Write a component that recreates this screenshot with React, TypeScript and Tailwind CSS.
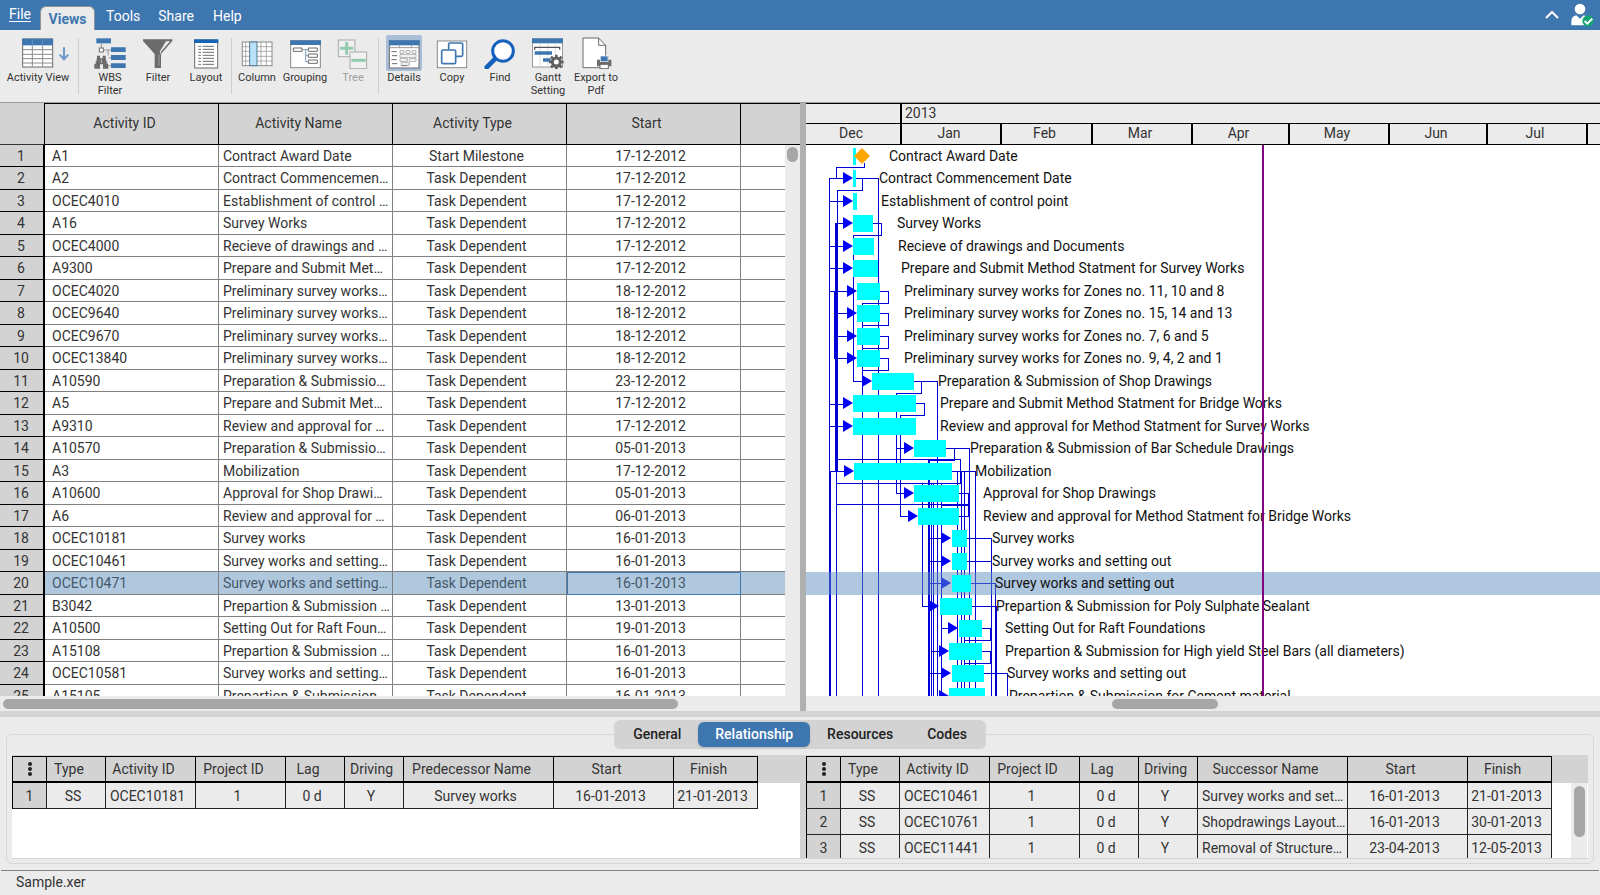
import React, { useState } from 'react';
import clsx from 'clsx';

interface Activity {
  id: string;
  name: string;
  type: string;
  start: string;
  // bar start, bar end and label position on the time scale
  from: number;
  to: number;
  label: number;
  arrow?: number;
}

interface Relation {
  type: string;
  activityId: string;
  projectId: string;
  lag: string;
  driving: string;
  name: string;
  start: string;
  finish: string;
}

const TASK = 'Task Dependent';

const activities: Activity[] = [
  { id: 'A1', name: 'Contract Award Date', type: 'Start Milestone', start: '17-12-2012', from: 47, to: 50, label: 83 },
  { id: 'A2', name: 'Contract Commencement Date', type: TASK, start: '17-12-2012', from: 47, to: 50, label: 73, arrow: 47 },
  { id: 'OCEC4010', name: 'Establishment of control point', type: TASK, start: '17-12-2012', from: 47, to: 51, label: 75, arrow: 47 },
  { id: 'A16', name: 'Survey Works', type: TASK, start: '17-12-2012', from: 47, to: 67, label: 91, arrow: 47 },
  { id: 'OCEC4000', name: 'Recieve of drawings and Documents', type: TASK, start: '17-12-2012', from: 47, to: 68, label: 92, arrow: 47 },
  { id: 'A9300', name: 'Prepare and Submit Method Statment for Survey Works', type: TASK, start: '17-12-2012', from: 47, to: 72, label: 95, arrow: 47 },
  { id: 'OCEC4020', name: 'Preliminary survey works for Zones no. 11, 10 and 8', type: TASK, start: '18-12-2012', from: 51, to: 74, label: 98, arrow: 51 },
  { id: 'OCEC9640', name: 'Preliminary survey works for Zones no. 15, 14 and 13', type: TASK, start: '18-12-2012', from: 51, to: 74, label: 98, arrow: 51 },
  { id: 'OCEC9670', name: 'Preliminary survey works for Zones no. 7, 6 and 5', type: TASK, start: '18-12-2012', from: 51, to: 74, label: 98, arrow: 51 },
  { id: 'OCEC13840', name: 'Preliminary survey works for Zones no. 9, 4, 2 and 1', type: TASK, start: '18-12-2012', from: 51, to: 74, label: 98, arrow: 51 },
  { id: 'A10590', name: 'Preparation & Submission of Shop Drawings', type: TASK, start: '23-12-2012', from: 66, to: 108, label: 132, arrow: 66 },
  { id: 'A5', name: 'Prepare and Submit Method Statment for Bridge Works', type: TASK, start: '17-12-2012', from: 47, to: 110, label: 134, arrow: 47 },
  { id: 'A9310', name: 'Review and approval for Method Statment for Survey Works', type: TASK, start: '17-12-2012', from: 47, to: 110, label: 134, arrow: 47 },
  { id: 'A10570', name: 'Preparation & Submission of Bar Schedule Drawings', type: TASK, start: '05-01-2013', from: 108, to: 140, label: 164, arrow: 108 },
  { id: 'A3', name: 'Mobilization', type: TASK, start: '17-12-2012', from: 48, to: 146, label: 169, arrow: 48 },
  { id: 'A10600', name: 'Approval for Shop Drawings', type: TASK, start: '05-01-2013', from: 108, to: 153, label: 177, arrow: 108 },
  { id: 'A6', name: 'Review and approval for Method Statment for Bridge Works', type: TASK, start: '06-01-2013', from: 112, to: 153, label: 177, arrow: 112 },
  { id: 'OCEC10181', name: 'Survey works', type: TASK, start: '16-01-2013', from: 146, to: 161, label: 186, arrow: 145 },
  { id: 'OCEC10461', name: 'Survey works and setting out', type: TASK, start: '16-01-2013', from: 146, to: 161, label: 186, arrow: 145 },
  { id: 'OCEC10471', name: 'Survey works and setting out', type: TASK, start: '16-01-2013', from: 146, to: 165, label: 189, arrow: 145 },
  { id: 'B3042', name: 'Prepartion & Submission for Poly Sulphate Sealant', type: TASK, start: '13-01-2013', from: 134, to: 166, label: 190, arrow: 133 },
  { id: 'A10500', name: 'Setting Out for Raft Foundations', type: TASK, start: '19-01-2013', from: 153, to: 176, label: 199, arrow: 152 },
  { id: 'A15108', name: 'Prepartion & Submission for High yield Steel Bars (all diameters)', type: TASK, start: '16-01-2013', from: 143, to: 176, label: 199, arrow: 143 },
  { id: 'OCEC10581', name: 'Survey works and setting out', type: TASK, start: '16-01-2013', from: 146, to: 178, label: 201, arrow: 145 },
  { id: 'A15105', name: 'Prepartion & Submission for Cement material', type: TASK, start: '16-01-2013', from: 143, to: 179, label: 203, arrow: 143 },
];

const predecessors: Relation[] = [
  { type: 'SS', activityId: 'OCEC10181', projectId: '1', lag: '0 d', driving: 'Y', name: 'Survey works', start: '16-01-2013', finish: '21-01-2013' },
];

const successors: Relation[] = [
  { type: 'SS', activityId: 'OCEC10461', projectId: '1', lag: '0 d', driving: 'Y', name: 'Survey works and setting out', start: '16-01-2013', finish: '21-01-2013' },
  { type: 'SS', activityId: 'OCEC10761', projectId: '1', lag: '0 d', driving: 'Y', name: 'Shopdrawings Layout…', start: '16-01-2013', finish: '30-01-2013' },
  { type: 'SS', activityId: 'OCEC11441', projectId: '1', lag: '0 d', driving: 'Y', name: 'Removal of Structure…', start: '23-04-2013', finish: '12-05-2013' },
];

const months = [
  { name: 'Dec', width: 'w-24' },
  { name: 'Jan', width: 'w-[100px]' },
  { name: 'Feb', width: 'w-[91px]' },
  { name: 'Mar', width: 'w-[100px]' },
  { name: 'Apr', width: 'w-[97px]' },
  { name: 'May', width: 'w-[100px]' },
  { name: 'Jun', width: 'w-[98px]' },
  { name: 'Jul', width: 'w-[100px]' },
  { name: '', width: 'w-[100px]' },
];

const links = [
  'M58 18 V22 H30 V33 H37',
  'M38 33 H23 V326',
  'M50 33 H72 V551',
  'M56 33 V45 H31 V326',
  'M38 78 H30',
  'M30 326 V551',
  'M67 78 H75 V90 H47 V236 H56',
  'M23 56 H37 M23 101 H37 M23 123 H37 M23 146 H41',
  'M28 168 H41 M28 191 H41 M28 213 H41',
  'M28 146 V213',
  'M74 146 H82 V158 H56 V551',
  'M74 168 H82 V180 H56',
  'M74 191 H82 V203 H56',
  'M74 213 H82 V225 H56',
  'M107 236 H131 V551',
  'M115 236 V248 H90 V348 H98',
  'M23 259 H37 M23 281 H37',
  'M110 258 H118 V270 H94 V371 H102',
  'M90 303 H98',
  'M140 303 H163 V551',
  'M148 303 V315 H122',
  'M31 314 H154 V338 H30',
  'M24 326 H38',
  'M145 326 H169 V551',
  'M151 326 V551',
  'M155 326 V551',
  'M158 326 V551',
  'M153 348 H162 V359 H30',
  'M153 371 H162 V359',
  'M116 338 V461 H124',
  'M125 338 V551',
  'M127 338 V551',
  'M135 338 V551',
  'M122 393 H136 M122 416 H136 M122 438 H136 M122 528 H136',
  'M161 393 H185 V551',
  'M161 416 H185',
  'M165 438 H189 V551',
  'M166 461 H190 V551',
  'M135 483 H143',
  'M176 483 H184 V495 H158',
  'M176 506 H184 V518 H158',
  'M126 506 H134',
  'M178 528 H201 V551',
];

const thickLinks = [
  'M24 326 V551',
  'M30 78 V326',
  'M123 315 V551',
  'M135 360 H162',
  'M190 461 V551',
];

const rowCenter = (index: number) => Math.floor(11 + index * 22.5);

const GRAY = '#6b6b6b';
const BLUE = '#3e76b0';

const ActivityViewIcon = () => (
  <svg width="64" height="32" viewBox="0 0 192 96" fill="none">
    <rect x="50" y="6" width="90" height="84" fill="#fff" stroke={GRAY} strokeWidth="3" />
    <rect x="49" y="5" width="92" height="20" fill={BLUE} />
    <path d="M79 25 V89 M110 25 V89 M51 38 H139 M51 52 H139 M51 65 H139 M51 78 H139" stroke="#8a8a8a" strokeWidth="3" />
    <path d="M79 5 V25 M110 5 V25" stroke="#6f9ac5" strokeWidth="2" />
    <path d="M174 31 V66 M161 53 L174 67 L187 53" stroke="#6b98c9" strokeWidth="6" />
  </svg>
);

const WbsIcon = () => (
  <svg width="32" height="32" viewBox="0 0 96 96" fill="none">
    <path d="M22 19 V32 M29 39 H51 M44 62 H51 M44 86 H51 M42 40 V55" stroke={GRAY} strokeWidth="2" />
    <rect x="7" y="4" width="44" height="15" fill={BLUE} />
    <rect x="16" y="33" width="12" height="12" fill="#fff" stroke={GRAY} strokeWidth="3" />
    <path d="M51 31 H95 V45 H51z M51 54 H95 V69 H51z M51 79 H95 V93 H51z" fill={BLUE} />
    <path d="M9 56 h9 v8 h8 v-8 h9 v7 l8 20 v12 H27 V82 h-9 v13 H1 V83 l8 -20z" fill={GRAY} />
    <path d="M7 66 l-3 15 M37 66 l3 15 M22 68 v10" stroke="#ebebeb" strokeWidth="2" />
  </svg>
);

const FilterIcon = () => (
  <svg width="32" height="32" viewBox="0 0 96 96">
    <path d="M3 7 H91 V12 L57 51 V93 H38 V51 L3 12z" fill={GRAY} />
    <path d="M72 13 H84 L57 44 V52 L53 44z" fill="#ebebeb" />
    <path d="M51 52 V86" stroke="#b5b5b5" strokeWidth="2" />
  </svg>
);

const LayoutIcon = () => (
  <svg width="32" height="32" viewBox="0 0 96 96" fill="none">
    <rect x="14" y="9" width="69" height="84" fill="#fff" stroke={GRAY} strokeWidth="3" />
    <rect x="12" y="7" width="73" height="11" fill="#1763b5" />
    <path d="M25 28 h8 M25 37 h8 M25 46 h8 M25 55 h8 M25 64 h8 M25 73 h8 M25 82 h8" stroke={GRAY} strokeWidth="3" />
    <path d="M38 28 H72 M38 37 H72 M38 46 H72 M38 55 H72 M38 64 H72 M38 73 H72 M38 82 H72" stroke={GRAY} strokeWidth="3" />
  </svg>
);

const ColumnIcon = () => (
  <svg width="32" height="32" viewBox="0 0 96 96" fill="none">
    <rect x="4" y="15" width="89" height="71" fill="#fff" stroke="#8a8a8a" strokeWidth="3" />
    <path d="M14 15 V86 M60 15 V86 M76 15 V86 M4 29 H93 M4 43 H93 M4 58 H93 M4 72 H93" stroke="#8a8a8a" strokeWidth="2" />
    <rect x="26" y="15" width="22" height="71" fill="#b9e1fa" stroke="#55788f" strokeWidth="3" />
  </svg>
);

const GroupingIcon = () => (
  <svg width="32" height="32" viewBox="0 0 96 96" fill="none">
    <rect x="5" y="11" width="89" height="81" fill="#fff" stroke="#8a8a8a" strokeWidth="3" />
    <rect x="4" y="10" width="92" height="14" fill={BLUE} />
    <path d="M39 38 H58 M50 38 V74 H58 M50 56 H58" stroke={BLUE} strokeWidth="2" />
    <path d="M13 33 H39 V43 H13z M58 33 H85 V43 H58z M58 51 H85 V61 H58z M58 69 H85 V79 H58z" fill="#fff" stroke={GRAY} strokeWidth="3" />
  </svg>
);

const TreeIcon = () => (
  <svg width="32" height="32" viewBox="0 0 96 96" fill="none">
    <rect x="4" y="9" width="50" height="50" fill="#f0f0f0" stroke="#a9a9a9" strokeWidth="3" />
    <path d="M29 15 V53 M9 34 H49" stroke="#93cbb0" strokeWidth="9" />
    <rect x="39" y="45" width="50" height="50" fill="#f0f0f0" stroke="#a9a9a9" strokeWidth="3" />
    <path d="M43 70 H86" stroke="#93cbb0" strokeWidth="9" />
  </svg>
);

const DetailsIcon = () => (
  <svg width="32" height="32" viewBox="0 0 96 96" fill="none">
    <rect x="4" y="12" width="89" height="81" fill="#fff" stroke={GRAY} strokeWidth="3" />
    <rect x="3" y="10" width="92" height="15" fill={BLUE} />
    <path d="M3 32 H94 M35 25 V32 M70 25 V32" stroke="#9a9a9a" strokeWidth="3" />
    <path d="M10 44 h16 M12 56 h16 M10 68 h16 M12 80 h16 M40 86 h18" stroke={GRAY} strokeWidth="3" />
    <path d="M36 41 h12 v8 h-12z M54 41 h12 v8 h-12z M72 41 h12 v8 h-12z M36 53 h48 v8 h-48z M36 65 h22 v8 h-22z M64 65 h20 v8 h-20z M40 77 h24 v8 h-24z" stroke="#8a8a8a" strokeWidth="2" />
  </svg>
);

const CopyIcon = () => (
  <svg width="32" height="32" viewBox="0 0 96 96" fill="none">
    <rect x="4" y="12" width="88" height="80" fill="#fff" stroke="#8a8a8a" strokeWidth="3" />
    <rect x="38" y="18" width="42" height="40" rx="4" fill="#fff" stroke={BLUE} strokeWidth="5" />
    <rect x="17" y="39" width="42" height="41" rx="4" fill="#fff" stroke={BLUE} strokeWidth="5" />
  </svg>
);

const FindIcon = () => (
  <svg width="32" height="32" viewBox="0 0 96 96" fill="none" stroke="#1560bd">
    <path d="M34 65 L8 91" strokeWidth="14" strokeLinecap="round" />
    <circle cx="57" cy="42" r="31" fill="#fff" strokeWidth="9" />
  </svg>
);

const GanttIcon = () => (
  <svg width="32" height="32" viewBox="0 0 96 96" fill="none">
    <rect x="1" y="6" width="91" height="84" fill="#fff" stroke={GRAY} strokeWidth="2" />
    <rect x="0" y="4" width="93" height="15" fill={BLUE} />
    <path d="M24 20 V89 M47 20 V89 M70 20 V60" stroke="#cfcfcf" strokeWidth="2" />
    <path d="M8 38 V31 H83 V38" stroke="#555" strokeWidth="4" />
    <path d="M8 43 H60 V53 H8z M33 64 H56 V74 H33z" fill={BLUE} />
    <path d="M73 53 V97 M51 75 H95 M57 59 L89 91 M89 59 L57 91" stroke="#5f5f5f" strokeWidth="8" />
    <circle cx="73" cy="75" r="12" fill="#fff" stroke="#5f5f5f" strokeWidth="9" />
  </svg>
);

const ExportIcon = () => (
  <svg width="32" height="32" viewBox="0 0 96 96" fill="none">
    <path d="M9 3 H56 L77 25 V92 H9z" fill="#fff" stroke={GRAY} strokeWidth="3" />
    <path d="M56 3 V25 H77" stroke={GRAY} strokeWidth="3" />
    <path d="M60 57 H85 V68 H94 V88 H51 V68 H60z" fill={GRAY} />
    <rect x="61" y="57" width="23" height="17" fill={BLUE} stroke="#fff" strokeWidth="2" />
    <rect x="60" y="82" width="25" height="13" fill="#fff" stroke={GRAY} strokeWidth="3" />
  </svg>
);

const UserIcon = () => (
  <svg width="24" height="24" viewBox="0 0 72 72">
    <circle cx="27" cy="18" r="16" fill="#fff" />
    <path d="M1 66 V56 Q1 39 16 37 L27 47 L38 37 Q52 39 52 56 V66 Q52 67 46 67 H6 Q1 67 1 66z" fill="#fff" />
    <circle cx="51" cy="54" r="17" fill="#14a672" />
    <path d="M41 54 L49 62 L64 47" fill="none" stroke="#fff" strokeWidth="6" />
  </svg>
);

interface ToolButtonProps {
  label: string;
  icon: React.ReactNode;
  active?: boolean;
  disabled?: boolean;
  wide?: boolean;
}

const ToolButton: React.FC<ToolButtonProps> = ({ label, icon, active, disabled, wide }) => (
  <button
    type="button"
    disabled={disabled}
    className={clsx(
      'flex shrink-0 flex-col items-center text-[11px] leading-[13px]',
      wide ? 'w-[76px]' : 'w-12',
      disabled ? 'text-[#a0a0a0]' : 'text-[#333]'
    )}
  >
    <span className={clsx('flex h-9 items-center justify-center rounded-xs', !wide && 'w-9', active && 'bg-[#a9bed6]')}>
      {icon}
    </span>
    {label}
  </button>
);

const Separator = () => <div className="mx-px mt-[3px] h-14 w-px shrink-0 bg-[#cdcdcd]" />;

const MenuBar = () => (
  <header className="flex h-[30px] shrink-0 items-end bg-[#3e76b0] text-sm text-white">
    <nav className="flex h-full flex-1 items-end">
      <button type="button" className="mb-[2px] flex h-7 w-10 items-center justify-center leading-7 underline underline-offset-2">
        File
      </button>
      <button type="button" className="h-6 w-[55px] rounded-t-md border border-b-0 border-[#8f9499] bg-[#ebebeb] font-bold text-[#3e76b0]">
        Views
      </button>
      <button type="button" className="ml-[11px] h-7">Tools</button>
      <button type="button" className="ml-[18px] h-7">Share</button>
      <button type="button" className="ml-[19px] h-7">Help</button>
    </nav>
    <div className="flex h-full items-center gap-3 pr-[5px]">
      <button type="button" aria-label="Collapse toolbar">
        <svg width="14" height="10" viewBox="0 0 14 10" fill="none" stroke="#fff" strokeWidth="2">
          <path d="M1 8 L7 2 L13 8" />
        </svg>
      </button>
      <button type="button" aria-label="Account">
        <UserIcon />
      </button>
    </div>
  </header>
);

const Toolbar = () => (
  <div className="flex h-[73px] shrink-0 border-b border-[#9b9b9b] bg-[#ebebeb] pt-[5px]">
    <ToolButton wide label="Activity View" icon={<ActivityViewIcon />} />
    <div className="w-px" />
    <Separator />
    <div className="w-[6px]" />
    <ToolButton label="WBS Filter" icon={<WbsIcon />} />
    <ToolButton label="Filter" icon={<FilterIcon />} />
    <ToolButton label="Layout" icon={<LayoutIcon />} />
    <Separator />
    <ToolButton label="Column" icon={<ColumnIcon />} />
    <ToolButton label="Grouping" icon={<GroupingIcon />} />
    <ToolButton label="Tree" icon={<TreeIcon />} disabled />
    <Separator />
    <ToolButton label="Details" icon={<DetailsIcon />} active />
    <ToolButton label="Copy" icon={<CopyIcon />} />
    <ToolButton label="Find" icon={<FindIcon />} />
    <ToolButton label="Gantt Setting" icon={<GanttIcon />} />
    <ToolButton label="Export to Pdf" icon={<ExportIcon />} />
  </div>
);

interface SelectionProps {
  selected: number;
  onSelect: (index: number) => void;
}

const ActivityTable: React.FC<SelectionProps> = ({ selected, onSelect }) => (
  <div className="flex w-1/2 min-w-0 flex-col">
    <div className="relative min-h-0 flex-1 overflow-hidden bg-white">
      <table className="w-full table-fixed border-separate border-spacing-0 text-sm leading-5 text-[#333]">
        <colgroup>
          <col className="w-[45px]" />
          <col className="w-[174px]" />
          <col className="w-[174px]" />
          <col className="w-[174px]" />
          <col className="w-[174px]" />
          <col />
          <col className="w-[15px]" />
        </colgroup>
        <thead>
          <tr className="h-[42px] bg-[#d3d3d3]">
            <th className="border-r border-b border-black border-b-[#333]" />
            {['Activity ID', 'Activity Name', 'Activity Type', 'Start', ''].map((title, i) => (
              <th
                key={i}
                className={clsx('border-t border-b border-black p-0 pr-[14px] pb-[2px] font-normal', i < 4 && 'border-r')}
              >
                {title}
              </th>
            ))}
            <th className="border-t border-b border-black" />
          </tr>
        </thead>
        <tbody>
          {activities.map((a, i) => (
            <tr
              key={a.id}
              onClick={() => onSelect(i)}
              className={clsx('odd:h-[22px] even:h-[23px]', i === selected ? 'bg-[#b0c8de] text-[#44586b]' : 'bg-white')}
            >
              <td className="border-r-2 border-b border-black bg-[#d3d3d3] p-0 pr-px text-center text-[#333]">{i + 1}</td>
              <td className="border-r border-b border-[#808080] p-0 pl-[7px]">{a.id}</td>
              <td className="truncate border-r border-b border-[#808080] p-0 pr-[2px] pl-1">{a.name}</td>
              <td className="border-r border-b border-[#808080] p-0 pr-[6px] text-center">{a.type}</td>
              <td
                className={clsx(
                  'border-r border-b border-[#808080] p-0 pr-[6px] text-center',
                  i === selected && 'outline outline-1 -outline-offset-1 outline-[#3e76b0]'
                )}
              >
                {a.start}
              </td>
              <td className="border-b border-[#808080] p-0" />
              <td className="bg-[#ebebeb] p-0" />
            </tr>
          ))}
        </tbody>
      </table>
      <div className="absolute top-11 right-[2px] h-[15px] w-[11px] rounded-full bg-[#a6a6a6]" />
    </div>
    <div className="h-[15px] shrink-0 bg-[#ebebeb] px-[3px] pt-[3px]">
      <div className="h-[10px] w-[85%] rounded-full bg-[#a6a6a6]" />
    </div>
  </div>
);

const GanttChart: React.FC<SelectionProps> = ({ selected, onSelect }) => (
  <div className="flex min-w-0 flex-1 flex-col text-sm text-[#333]">
    <div className="shrink-0 overflow-hidden border-y border-black bg-[#ebebeb]">
      <div className="flex h-5 border-b border-black leading-[19px]">
        <div className="w-[94px] shrink-0" />
        <div className="flex-1 border-l-2 border-black pl-[3px]">2013</div>
      </div>
      <div className="flex h-5 leading-[19px]">
        {months.map((m, i) => (
          <div key={i} className={clsx('shrink-0 border-r-2 border-black pr-1 text-center', m.width)}>
            {m.name}
          </div>
        ))}
      </div>
    </div>
    <div className="min-h-0 flex-1 overflow-hidden bg-white">
      <svg className="block h-full w-full" fontFamily="Roboto, sans-serif" fontSize="14">
        <g fill="none" stroke="#0000d6" strokeWidth="1" shapeRendering="crispEdges">
          {links.map((d) => (
            <path key={d} d={d} />
          ))}
        </g>
        <g fill="none" stroke="#0000d6" strokeWidth="2" shapeRendering="crispEdges">
          {thickLinks.map((d) => (
            <path key={d} d={d} />
          ))}
        </g>
        {activities.map((a, i) => {
          const y = rowCenter(i);
          return a.arrow ? (
            <polygon key={a.id} fill="#0000f5" points={`${a.arrow - 10},${y - 6} ${a.arrow},${y} ${a.arrow - 10},${y + 6}`} />
          ) : null;
        })}
        <rect x="0" y={rowCenter(selected) - 11} width="100%" height="23" fill="#6090c0" fillOpacity="0.5" />
        {activities.map((a, i) => {
          const y = rowCenter(i);
          return (
            <g key={a.id} onClick={() => onSelect(i)}>
              <rect x={a.from} y={y - 8} width={a.to - a.from} height="17" fill="#00ffff" />
              {i === 0 && <path d="M56 3 L64 11 L56 19 L48 11z" fill="#ffa500" />}
              <text x={a.label} y={y + 5} fill="#111">
                {a.name}
              </text>
            </g>
          );
        })}
        <path d="M457 0 V2000" stroke="#800080" strokeWidth="2" shapeRendering="crispEdges" />
      </svg>
    </div>
    <div className="h-[15px] shrink-0 bg-[#ebebeb] pt-[3px]">
      <div className="ml-[306px] h-[10px] w-[106px] rounded-full bg-[#a6a6a6]" />
    </div>
  </div>
);

interface RelationTableProps {
  nameTitle: string;
  rows: Relation[];
  scroll?: boolean;
}

const RelationTable: React.FC<RelationTableProps> = ({ nameTitle, rows, scroll }) => {
  const cell = 'border-r border-b border-[#222] p-0';
  return (
    <div
      className={clsx(
        'relative h-[104px] overflow-hidden border-b border-[#d3d3d3] bg-white',
        scroll ? 'flex-1' : 'w-1/2 shrink-0'
      )}
    >
      <div className="bg-[#d3d3d3] pt-px">
        <div className="h-[27px]" />
      </div>
      <table className="-mt-[27px] w-[746px] table-fixed border-separate border-spacing-0 border-l border-black text-sm leading-5 whitespace-nowrap text-[#333]">
        <colgroup>
          <col className="w-[34px]" />
          <col className="w-[59px]" />
          <col className="w-[90px]" />
          <col className="w-[90px]" />
          <col className="w-[59px]" />
          <col className="w-[59px]" />
          <col className="w-[150px]" />
          <col className="w-[120px]" />
          <col className="w-[84px]" />
        </colgroup>
        <thead>
          <tr className="h-[27px] bg-[#d3d3d3]">
            <th className="border-t border-r border-b-2 border-black p-0">
              <svg className="mx-auto" width="4" height="14" viewBox="0 0 4 14" fill="#222">
                <circle cx="2" cy="2" r="2" />
                <circle cx="2" cy="7" r="2" />
                <circle cx="2" cy="12" r="2" />
              </svg>
            </th>
            {['Type', 'Activity ID', 'Project ID', 'Lag', 'Driving', nameTitle, 'Start', 'Finish'].map((title) => (
              <th key={title} className="border-t border-r border-b-2 border-black p-0 pr-[19px] pl-[5px] font-normal">
                {title}
              </th>
            ))}
          </tr>
        </thead>
        <tbody>
          {rows.map((r, i) => (
            <tr key={r.activityId} className="h-[26px] bg-[#ebebeb] text-center">
              <td className={clsx(cell, 'bg-[#d3d3d3]')}>{i + 1}</td>
              <td className={clsx(cell, 'pr-[6px]')}>{r.type}</td>
              <td className={clsx(cell, 'pr-[6px]')}>{r.activityId}</td>
              <td className={clsx(cell, 'pr-[6px]')}>{r.projectId}</td>
              <td className={clsx(cell, 'pr-[6px]')}>{r.lag}</td>
              <td className={clsx(cell, 'pr-[6px]')}>{r.driving}</td>
              <td className={clsx(cell, scroll ? 'truncate pl-1 text-left' : 'pr-[6px]')}>{r.name}</td>
              <td className={clsx(cell, 'pr-[6px]')}>{r.start}</td>
              <td className={clsx(cell, 'pr-[6px]')}>{r.finish}</td>
            </tr>
          ))}
        </tbody>
      </table>
      {scroll && (
        <div className="absolute top-7 right-px h-full w-4 bg-[#ebebeb] pt-[3px]">
          <div className="mx-auto h-[51px] w-[11px] rounded-full bg-[#a6a6a6]" />
        </div>
      )}
    </div>
  );
};

const tabs = ['General', 'Relationship', 'Resources', 'Codes'];

const DetailsPanel = () => {
  const [tab, setTab] = useState('Relationship');

  return (
    <section className="shrink-0 bg-[#ebebeb] pt-[3px] pb-[6px]">
      <div className="relative z-10 flex justify-center">
        <div className="flex rounded-md bg-[#d3d3d3] p-[2px]" role="tablist">
          {tabs.map((t) => (
            <button
              key={t}
              type="button"
              role="tab"
              aria-selected={t === tab}
              onClick={() => setTab(t)}
              className={clsx(
                'h-[25px] rounded-md px-[17px] pb-[2px] text-sm font-medium',
                t === tab ? 'bg-[#3e76b0] text-white shadow-sm' : 'text-[#222]'
              )}
            >
              {t}
            </button>
          ))}
        </div>
      </div>
      <div className="mx-[6px] -mt-[15px] flex rounded-md border border-[#d6d6d6] px-[5px] pt-5 pb-1">
        <RelationTable nameTitle="Predecessor Name" rows={predecessors} />
        <div className="w-[6px] shrink-0 bg-[#d3d3d3]" />
        <RelationTable nameTitle="Successor Name" rows={successors} scroll />
      </div>
    </section>
  );
};

const App: React.FC = () => {
  const [selected, setSelected] = useState(19);

  return (
    <div className="flex h-screen flex-col overflow-hidden bg-[#ebebeb] font-[Roboto,sans-serif]">
      <MenuBar />
      <Toolbar />

      {/* Activities and Gantt */}
      <main className="flex min-h-0 flex-1">
        <ActivityTable selected={selected} onSelect={setSelected} />
        <div className="w-[6px] shrink-0 bg-[#b0b0b0]" />
        <GanttChart selected={selected} onSelect={setSelected} />
      </main>
      <div className="h-[6px] shrink-0 bg-[#d3d3d3]" />

      <DetailsPanel />

      {/* Status bar */}
      <footer className="mx-px h-[25px] shrink-0 border-t border-[#808080] pl-[15px] text-sm leading-[22px] text-[#333]">
        Sample.xer
      </footer>
    </div>
  );
};

export default App;
